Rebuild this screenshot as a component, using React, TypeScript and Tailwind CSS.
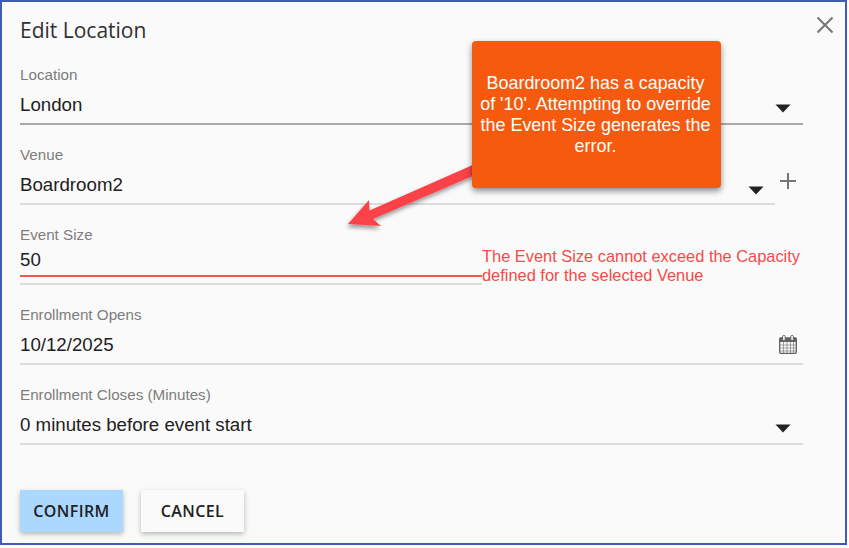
import React from "react";

function Caret({ className = "" }: { className?: string }) {
  return (
    <svg width="16" height="9" viewBox="0 0 16 9" className={className}>
      <path d="M0.5 0.5H15.5L8 8.5Z" fill="#212121" />
    </svg>
  );
}

function Field({
  label,
  value,
  line = "border-[#dcdcdc]",
  children,
  className = "",
}: {
  label: string;
  value: string;
  line?: string;
  children?: React.ReactNode;
  className?: string;
}) {
  return (
    <div className={`h-[80px] flex flex-col justify-end ${className}`}>
      <div className="text-[15.2px] leading-[20px] text-[#7d7d7d]">{label}</div>
      <div className={`h-[40px] flex items-center justify-between border-b-2 ${line} pr-[11px]`}>
        <span className="text-[18.7px] leading-[24px] mt-[2px] text-[#212121]">{value}</span>
        {children}
      </div>
    </div>
  );
}

export default function App() {
  return (
    <div className="w-[849px] h-[548px] bg-white overflow-hidden font-['Liberation_Sans',sans-serif]">
      <div className="relative w-[847px] h-[545px] bg-[#fafafa] border-2 border-[#3f5bb5] pl-[18px] pt-[15px]">
        <h1 className="text-[21px] leading-[26px] mb-[2px] font-normal text-[#303030] font-['Open_Sans',sans-serif]">Edit Location</h1>

        <button className="absolute top-[14px] right-[11px]" aria-label="Close">
          <svg width="18" height="18" viewBox="0 0 18 18" fill="none" stroke="#757575" strokeWidth="2">
            <path d="M1.5 1.5L16.5 16.5M16.5 1.5L1.5 16.5" />
          </svg>
        </button>

        <div className="w-[783px]">
          <Field label="Location" value="London" line="border-[#a9a9a9]">
            <Caret className="mt-[9px] mr-[1px]" />
          </Field>

          <div className="flex items-start">
            <Field label="Venue" value="Boardroom2" className="w-[755px] shrink-0">
              <Caret className="mt-[12px]" />
            </Field>
            <svg width="18" height="18" viewBox="0 0 18 18" className="ml-[4px] mt-[47px]" fill="none" stroke="#757575" strokeWidth="2">
              <path d="M9 1V17M1 9H17" />
            </svg>
          </div>

          <div className="flex items-start">
            <div className="w-[462px] h-[80px] flex flex-col shrink-0">
              <div className="text-[15.2px] leading-[20px] text-[#7d7d7d] mt-[20px]">Event Size</div>
              <div className="text-[18.7px] leading-[24px] text-[#212121] mt-[3px]">50</div>
              <div className="h-[2px] bg-[#f2564f] mt-[3px]" />
              <div className="h-[2px] bg-[#dcdcdc] mt-[6px]" />
            </div>
            <p className="text-[16.4px] leading-[19px] text-[#f44a48] mt-[42px] whitespace-nowrap">
              The Event Size cannot exceed the Capacity
              <br />
              defined for the selected Venue
            </p>
          </div>

          <Field label="Enrollment Opens" value="10/12/2025">
            <svg width="18" height="19" viewBox="0 0 18 19" className="mr-[-5px]">
              <rect x="0.7" y="3" width="16.6" height="15.3" rx="1" fill="none" stroke="#616161" strokeWidth="1.3" />
              <rect x="0.7" y="3" width="16.6" height="4" fill="#616161" />
              <path d="M1 10H17M1 13H17M1 16H17M4.5 7V18M8 7V18M11.5 7V18M14.5 7V18" stroke="#8a8a8a" strokeWidth="0.8" />
              <rect x="3.6" y="0.5" width="2.6" height="5" rx="1" fill="#fafafa" stroke="#616161" />
              <rect x="11.8" y="0.5" width="2.6" height="5" rx="1" fill="#fafafa" stroke="#616161" />
            </svg>
          </Field>

          <Field label="Enrollment Closes (Minutes)" value="0 minutes before event start">
            <Caret className="mt-[9px] mr-[1px]" />
          </Field>

          <div className="flex gap-[18px] mt-[45px]">
            <button className="w-[103px] h-[42px] bg-[#abd8ff] text-[#212121] text-[16px] font-semibold tracking-[0.4px] font-['Open_Sans',sans-serif] shadow-[0_2px_5px_rgba(0,0,0,0.28)]">
              CONFIRM
            </button>
            <button className="w-[103px] h-[42px] bg-[#fafafa] text-[#212121] text-[16px] font-semibold tracking-[0.4px] font-['Open_Sans',sans-serif] shadow-[0_2px_5px_rgba(0,0,0,0.28)]">
              CANCEL
            </button>
          </div>
        </div>

        <svg className="absolute left-[328px] top-[148px]" width="160" height="90" viewBox="0 0 160 90">
          <defs>
            <filter id="arrowShadow" x="-20%" y="-20%" width="140%" height="160%">
              <feDropShadow dx="-1" dy="3" stdDeviation="2" floodColor="#000" floodOpacity="0.4" />
            </filter>
          </defs>
          <path d="M145 14L145 25L43 69L51 76L18 74L39 50L39.5 60.5Z" fill="#fc4349" filter="url(#arrowShadow)" />
        </svg>

        <div className="absolute left-[470px] top-[39px] w-[249px] h-[147px] rounded-[4px] bg-[#f55a0f] shadow-[0_3px_6px_rgba(0,0,0,0.45)] flex items-center justify-center text-center text-white text-[17.9px] leading-[21px] pr-[2px]">
          <span className="whitespace-nowrap">
            Boardroom2 has a capacity
            <br />
            of '10'. Attempting to override
            <br />
            the Event Size generates the
            <br />
            error.
          </span>
        </div>
      </div>
    </div>
  );
}
